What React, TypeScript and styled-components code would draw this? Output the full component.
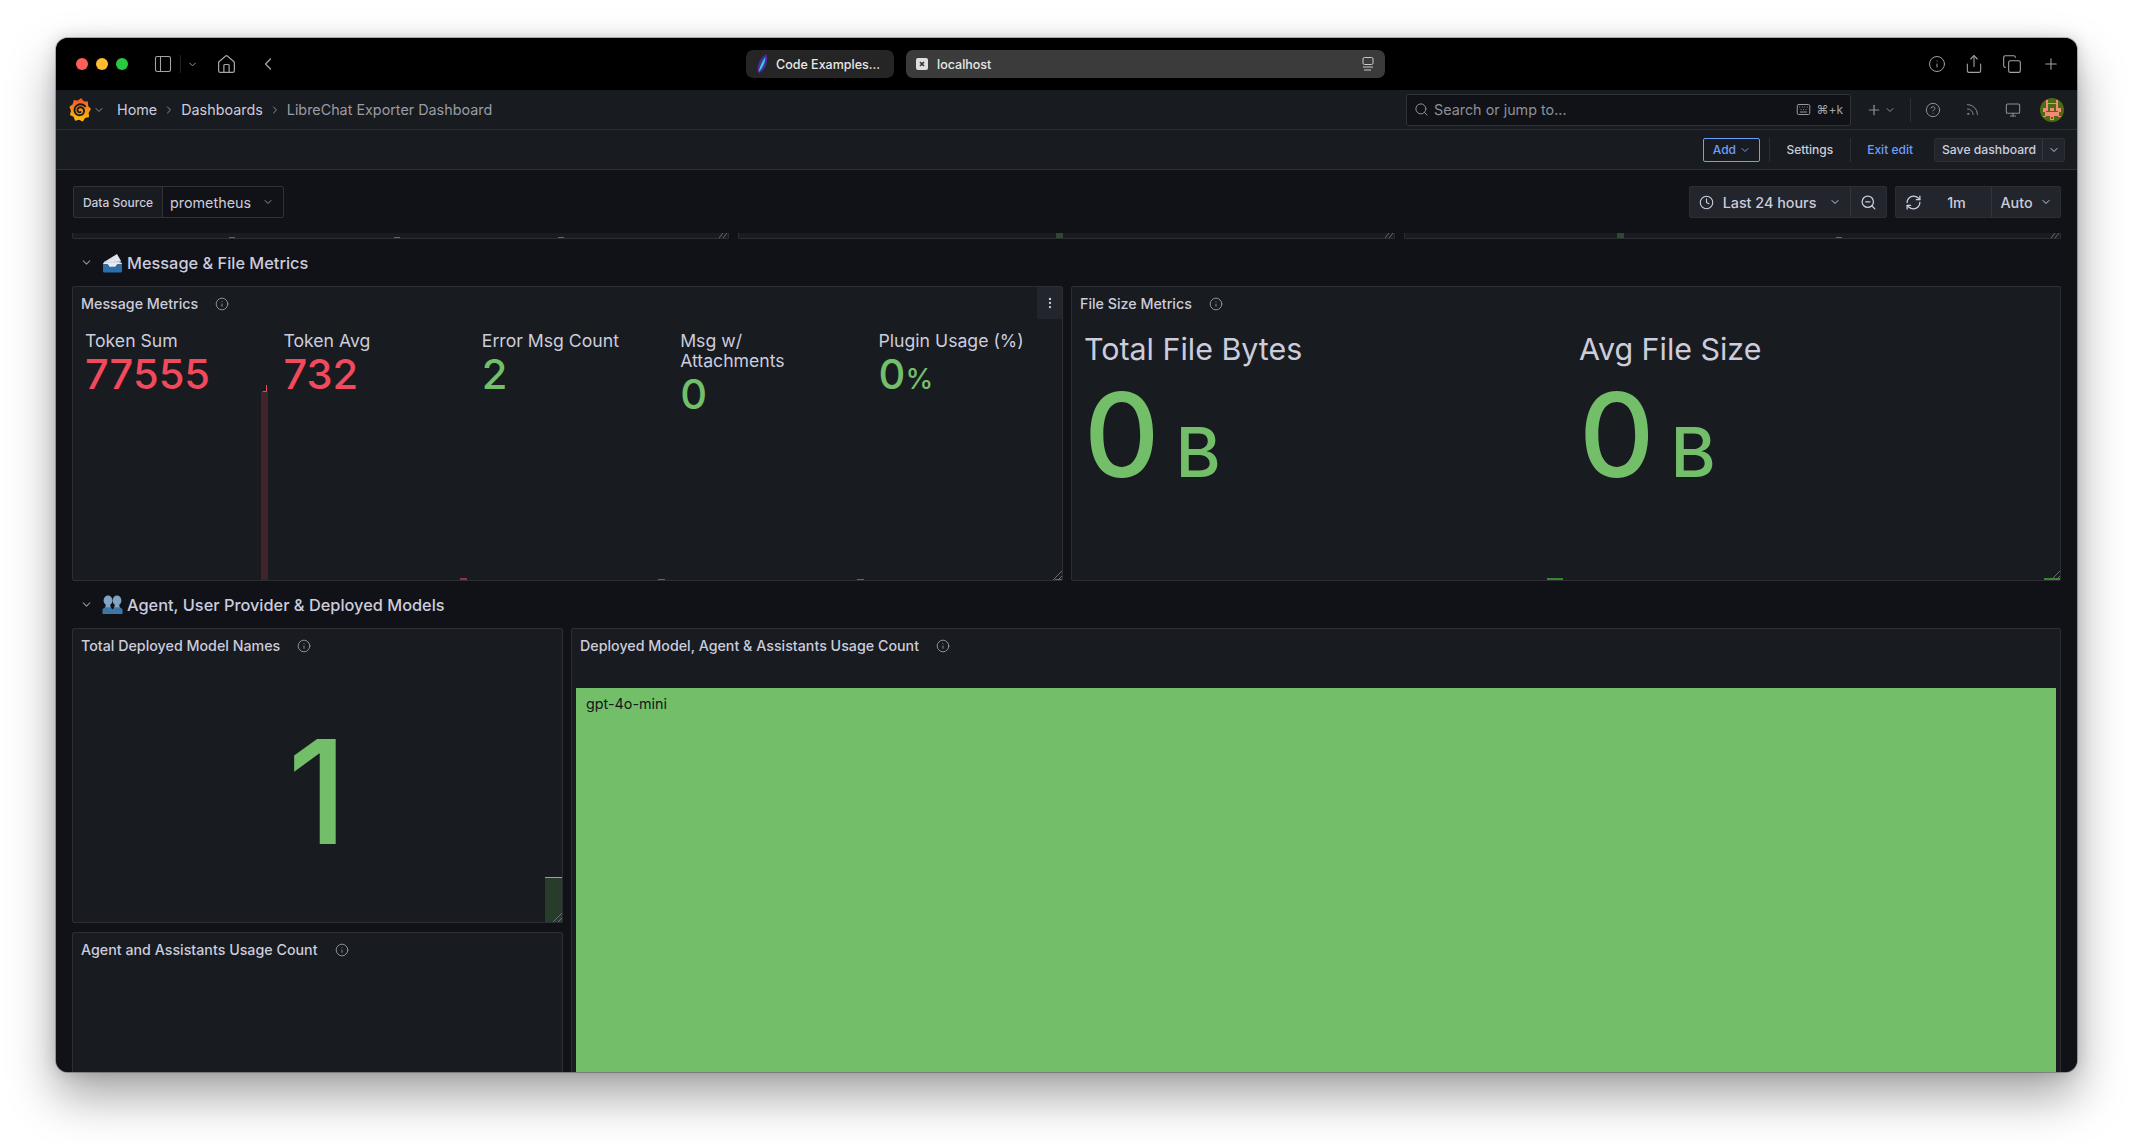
import React from "react";
import styled, { createGlobalStyle } from "styled-components";
import {
  ChevronDown, ChevronLeft, ChevronRight, Clock, Copy, EllipsisVertical, House, Info, Keyboard,
  CircleHelp, Monitor, PanelLeft, Plus, RefreshCw, Rss, Search, Share, ZoomOut,
} from "lucide-react";

const Global = createGlobalStyle`
  html, body { margin: 0; padding: 0; background: #fff; }
  * { box-sizing: border-box; }
  body { font-family: Inter, "Liberation Sans", sans-serif; }
`;

const Page = styled.div`
  width: 2133px;
  height: 1146px;
  padding: 38px 56px 0;
  overflow: hidden;
  background: #fff;
`;
const Window = styled.div`
  width: 2021px;
  height: 1034px;
  border-radius: 12px;
  overflow: hidden;
  display: flex;
  flex-direction: column;
  background: #111217;
  box-shadow: 0 24px 48px rgba(0, 0, 0, 0.36), 0 0 16px rgba(0, 0, 0, 0.16), 0 0 0 1px rgba(0, 0, 0, 0.25);
`;

/* Browser title bar */
const TitleBar = styled.div`
  height: 52px;
  flex: none;
  background: #000;
  display: flex;
  align-items: center;
  padding-left: 20px;
  color: #a4a4a4;
`;
const Lights = styled.div`
  display: flex;
  gap: 8px;
`;
const Light = styled.span<{ $c: string }>`
  width: 12px;
  height: 12px;
  border-radius: 50%;
  background: ${(p) => p.$c};
`;
const BarIcon = styled.span<{ $ml?: number }>`
  display: flex;
  margin-left: ${(p) => p.$ml ?? 0}px;
`;
const BarDivider = styled.span`
  width: 1px;
  height: 18px;
  background: #222;
  margin-left: 7px;
`;
const TabStrip = styled.div`
  position: relative;
  display: flex;
  gap: 12px;
  margin-left: 468px;
`;
const Tab = styled.div<{ $w: number; $active?: boolean }>`
  width: ${(p) => p.$w}px;
  height: 28px;
  border-radius: 7px;
  display: flex;
  align-items: center;
  padding-left: 10px;
  font-size: 12.5px;
  font-weight: 500;
  color: #e8e8e8;
  background: ${(p) => (p.$active ? "#3b3b3b" : "#252525")};
`;
const TabText = styled.span<{ $ml: number }>`
  margin-left: ${(p) => p.$ml}px;
`;
const TabEnd = styled.span`
  display: flex;
  margin-left: auto;
  margin-right: 11px;
`;
const BarRight = styled.div`
  margin-left: auto;
  display: flex;
  align-items: center;
  padding-right: 17px;
`;

/* Grafana nav */
const NavBar = styled.div`
  height: 40px;
  flex: none;
  background: #181b1f;
  border-bottom: 1px solid #2c2e33;
  display: flex;
  align-items: center;
  padding: 0 13px;
  color: #ccccdc;
  font-size: 14.35px;
`;
const Crumbs = styled.div`
  display: flex;
  align-items: center;
  gap: 6px;
  margin-left: 12px;
`;
const Crumb = styled.span<{ $muted?: boolean }>`
  color: ${(p) => (p.$muted ? "#9b9ca5" : "#ccccdc")};
`;
const Dim = styled.span<{ $ml?: number }>`
  display: flex;
  color: #8e9098;
  margin-left: ${(p) => p.$ml ?? 0}px;
`;
const SearchBox = styled.div`
  margin-left: auto;
  width: 445px;
  height: 32px;
  border: 1px solid #303237;
  border-radius: 2px;
  background: #111217;
  display: flex;
  align-items: center;
  padding: 0 7px 0 7px;
  color: #8e9098;
`;
const SearchText = styled.span`
  margin-left: 5px;
  color: #8e9098;
`;
const Kbd = styled.span`
  margin-left: auto;
  display: flex;
  align-items: center;
  gap: 5px;
  font-size: 12px;
  color: #a0a1a8;
`;
const NavDivider = styled.span`
  width: 1px;
  height: 24px;
  background: #2f3136;
  margin-left: 14px;
`;

/* Edit toolbar */
const Toolbar = styled.div`
  height: 40px;
  flex: none;
  background: #181b1f;
  border-bottom: 1px solid #2c2e33;
  display: flex;
  align-items: center;
  justify-content: flex-end;
  padding-right: 12px;
  font-size: 12px;
  font-weight: 500;
  color: #ccccdc;
`;
const AddButton = styled.div`
  width: 57px;
  height: 24px;
  border: 1px solid #6e9fff;
  border-radius: 2px;
  color: #6e9fff;
  display: flex;
  align-items: center;
  justify-content: center;
  gap: 3px;
  margin-right: 9px;
`;
const ToolDivider = styled.span`
  width: 1px;
  height: 24px;
  background: #2c2e33;
`;
const ToolText = styled.span<{ $ml: number; $mr: number; $blue?: boolean }>`
  margin: 0 ${(p) => p.$mr}px 0 ${(p) => p.$ml}px;
  color: ${(p) => (p.$blue ? "#6e9fff" : "#ccccdc")};
`;
const SaveGroup = styled.div`
  display: flex;
  width: 131px;
  height: 24px;
  margin-left: 21px;
  background: #22252b;
  border: 1px solid #2c2e33;
  border-radius: 2px;
`;
const SaveLabel = styled.span`
  width: 108px;
  padding-left: 7px;
  font-size: 12.2px;
  line-height: 22px;
  white-space: nowrap;
  border-right: 1px solid #36383e;
`;
const SaveCaret = styled.span`
  flex: 1;
  display: flex;
  align-items: center;
  justify-content: center;
`;

/* Dashboard */
const Content = styled.div`
  flex: 1;
  min-height: 0;
  overflow: hidden;
  padding: 16px 16px 0;
  background: #111217;
`;
const Controls = styled.div`
  display: flex;
  align-items: center;
  height: 32px;
  color: #ccccdc;
  font-size: 14.35px;
`;
const VarLabel = styled.div`
  width: 90px;
  height: 32px;
  margin-left: 1px;
  background: #181b1f;
  border: 1px solid #303237;
  border-radius: 2px 0 0 2px;
  font-size: 12px;
  font-weight: 500;
  display: flex;
  align-items: center;
  justify-content: center;
`;
const VarSelect = styled.div`
  width: 122px;
  height: 32px;
  margin-left: -1px;
  border: 1px solid #303237;
  border-radius: 0 2px 2px 0;
  display: flex;
  align-items: center;
  padding-left: 7px;
  gap: 11px;
`;
const Segments = styled.div<{ $w: number; $ml: number }>`
  width: ${(p) => p.$w}px;
  height: 32px;
  margin-left: ${(p) => p.$ml}px;
  background: #22252b;
  border: 1px solid #2c2e33;
  border-radius: 2px;
  display: flex;
  flex: none;
`;
const Seg = styled.div<{ $w?: number; $first?: boolean; $gap?: number }>`
  ${(p) => (p.$w ? `width: ${p.$w}px; flex: none;` : "flex: 1;")}
  display: flex;
  align-items: center;
  justify-content: center;
  gap: ${(p) => p.$gap ?? 9}px;
  ${(p) => (p.$first ? "" : "border-left: 1px solid #33353b;")}
`;
const SegText = styled.span<{ $ml?: number; $mr?: number }>`
  font-weight: 500;
  white-space: nowrap;
  margin-left: ${(p) => p.$ml ?? 0}px;
  margin-right: ${(p) => p.$mr ?? 0}px;
`;
const SegCaret = styled(ChevronDown)<{ $ml?: number }>`
  margin-left: ${(p) => p.$ml ?? 0}px;
`;
const Spacer = styled.div`
  flex: 1;
`;

const CutRow = styled.div`
  display: grid;
  grid-template-columns: repeat(3, 1fr);
  gap: 9px;
  height: 6px;
  margin-top: 15px;
`;
const CutPanel = styled.div`
  position: relative;
  overflow: hidden;
  background: #181b1f;
  border: 1px solid #2c2e33;
  border-top: 0;
  border-radius: 0 0 2px 2px;
`;
const CutTick = styled.span<{ $l: number; $w?: number; $h?: number; $c?: string }>`
  position: absolute;
  left: ${(p) => p.$l}px;
  bottom: 0;
  width: ${(p) => p.$w ?? 6}px;
  height: ${(p) => p.$h ?? 1}px;
  background: ${(p) => p.$c ?? "#37872d"};
`;
const CutHandle = styled.svg`
  position: absolute;
  right: 0;
  bottom: 0;
  width: 9px;
  height: 5px;
`;

const RowHeader = styled.div`
  height: 47px;
  display: flex;
  align-items: center;
  padding-left: 8px;
  color: #ccccdc;
  font-size: 16.35px;
  font-weight: 500;
`;
const RowTitle = styled.span`
  margin-left: 4px;
`;
const RowIcon = styled.span`
  display: flex;
  margin-left: 9px;
`;

const TwoUp = styled.div`
  display: grid;
  grid-template-columns: 991px 990px;
  gap: 8px;
  height: 295px;
`;
const ModelGrid = styled.div`
  display: grid;
  grid-template-columns: 491px 1490px;
  grid-template-rows: 295px 295px;
  column-gap: 8px;
  row-gap: 9px;
`;
const Panel = styled.section<{ $span?: number }>`
  position: relative;
  display: flex;
  flex-direction: column;
  background: #181b1f;
  border: 1px solid #2c2e33;
  border-radius: 2px;
  min-width: 0;
  ${(p) => (p.$span ? `grid-row: span ${p.$span};` : "")}
`;
const PanelHead = styled.header`
  height: 33px;
  flex: none;
  display: flex;
  align-items: center;
  padding-left: 8px;
  font-size: 14.25px;
  font-weight: 500;
  color: #ccccdc;
`;
const PanelInfo = styled.span`
  display: flex;
  margin-left: 17px;
  color: #9b9ca5;
`;
const PanelMenu = styled.span`
  position: absolute;
  top: 0;
  right: 0;
  width: 25px;
  height: 32px;
  background: #22252b;
  border-radius: 2px;
  display: flex;
  align-items: center;
  justify-content: center;
  color: #ccccdc;
`;
const Handle = styled.svg`
  position: absolute;
  right: 0;
  bottom: 0;
  width: 10px;
  height: 10px;
`;

const FiveStats = styled.div`
  flex: 1;
  min-height: 0;
  display: grid;
  grid-template-columns: repeat(5, 198.4px);
  padding: 11px 0 0 12px;
`;
const Stat = styled.div`
  position: relative;
  padding-right: 36px;
`;
const StatLabel = styled.div`
  font-size: 17.65px;
  line-height: 20px;
  color: #ccccdc;
`;
const StatValue = styled.div<{ $c: string }>`
  font-size: 41.6px;
  line-height: 46px;
  font-weight: 500;
  color: ${(p) => p.$c};
  white-space: nowrap;
`;
const StatUnit = styled.span`
  font-size: 28px;
`;
const Spark = styled.span<{ $h: number; $c: string; $w?: number }>`
  position: absolute;
  right: 15px;
  bottom: 0;
  width: ${(p) => p.$w ?? 7}px;
  height: ${(p) => p.$h}px;
  background: ${(p) => p.$c};
`;
const SparkTip = styled.svg`
  position: absolute;
  left: 0;
  top: -7px;
  width: 7px;
  height: 8px;
`;

const BigStats = styled.div`
  flex: 1;
  display: grid;
  grid-template-columns: 495px 1fr;
  padding: 11px 0 0 12px;
`;
const BigStat = styled.div`
  display: flex;
  flex-direction: column;
`;
const BigLabel = styled.div`
  font-size: 30.4px;
  line-height: 36px;
  color: #ccccdc;
`;
const BigValue = styled.div`
  margin-top: 3px;
  font-size: 117px;
  line-height: 130px;
  font-weight: 500;
  color: #73bf69;
  white-space: nowrap;
`;
const BigUnit = styled.span`
  font-size: 69px;
  margin-left: 16px;
`;
const BottomTick = styled.span<{ $r: number; $w: number }>`
  position: absolute;
  right: ${(p) => p.$r}px;
  bottom: 0;
  width: ${(p) => p.$w}px;
  height: 2px;
  background: #37872d;
`;

const CenterStat = styled.div`
  position: relative;
  flex: 1;
  display: flex;
  align-items: center;
  justify-content: center;
  font-size: 144px;
  font-weight: 500;
  color: #73bf69;
  padding-bottom: 1px;
`;
const MiniBar = styled.span`
  position: absolute;
  right: 0;
  bottom: 0;
  width: 17px;
  height: 45px;
  background: #273c2b;
  border-top: 1px solid #73bf69;
`;
const Treemap = styled.div`
  margin: 26px 4px 0 4px;
  flex: 1;
  background: #73bf69;
  padding: 7px 10px;
  font-size: 14.35px;
  line-height: 17px;
  color: #14161a;
`;

const spiral = (() => {
  const pts: string[] = [];
  for (let i = 0; i <= 60; i++) {
    const t = i / 60;
    const a = 1.2 + t * Math.PI * 2 * 1.7;
    const r = 1.6 + t * 5;
    pts.push(`${(11 + r * Math.cos(a)).toFixed(2)},${(12.5 + r * Math.sin(a)).toFixed(2)}`);
  }
  return pts.join(" ");
})();

const GrafanaLogo = () => {
  const pts: string[] = [];
  const n = 9;
  for (let i = 0; i < n * 2; i++) {
    const a = (i * Math.PI) / n - Math.PI / 2 + 0.1;
    const r = i % 2 === 0 ? 12 : 9.8;
    pts.push(`${(11 + r * Math.cos(a) * 0.92).toFixed(1)},${(12 + r * Math.sin(a)).toFixed(1)}`);
  }
  return (
    <svg width="22" height="24" viewBox="0 0 22 24">
      <defs>
        <linearGradient id="gf" x1="0" y1="1" x2="0" y2="0">
          <stop offset="0" stopColor="#fcc30b" />
          <stop offset="0.55" stopColor="#f78a1d" />
          <stop offset="1" stopColor="#ef4d28" />
        </linearGradient>
      </defs>
      <polygon points={pts.join(" ")} fill="url(#gf)" />
      <polyline points={spiral} fill="none" stroke="#181b1f" strokeWidth="1.9" strokeLinecap="round" />
    </svg>
  );
};

const Avatar = () => {
  const s = "#f28a76";
  const cells = [
    [4, 1, 1, 4], [10, 1, 1, 4], [5, 3, 5, 1], [4, 5, 1, 3], [10, 5, 1, 3], [2, 6, 2, 3], [11, 6, 2, 3],
    [6, 6, 3, 2], [3, 9, 9, 2], [6, 11, 3, 3], [2, 11, 2, 1], [11, 11, 2, 1],
  ];
  return (
    <svg width="24" height="24" viewBox="0 0 15 15" shapeRendering="crispEdges">
      <defs>
        <clipPath id="av"><circle cx="7.5" cy="7.5" r="7.5" /></clipPath>
      </defs>
      <g clipPath="url(#av)">
        <rect width="15" height="15" fill="#4d6b10" />
        {cells.map(([x, y, w, h], i) => (
          <rect key={i} x={x} y={y} width={w} height={h} fill={s} />
        ))}
        <rect x="7" y="12" width="1" height="1" fill="#4d6b10" />
      </g>
    </svg>
  );
};

const InboxEmoji = () => (
  <svg width="21" height="20" viewBox="0 0 21 20">
    <path d="M2 9 15 1l4 7-6 6H4z" fill="#dfe3ea" />
    <path d="M2 9l8 1 9-2" fill="none" stroke="#aeb6c2" strokeWidth="0.8" />
    <path d="M1 11h5l1.5 2.5h6L15 11h5v7a1.5 1.5 0 0 1-1.5 1.5h-16A1.5 1.5 0 0 1 1 18z" fill="#2d6ea8" />
    <path d="M1 11h5l1.5 2.5h6L15 11h5l-.6-1.4H1.6z" fill="#e8ecf2" />
  </svg>
);

const PeopleEmoji = () => (
  <svg width="21" height="20" viewBox="0 0 21 20">
    <g fill="#7fa4c4">
      <ellipse cx="6" cy="5.5" rx="4.4" ry="5" />
      <ellipse cx="15" cy="5.5" rx="4.4" ry="5" />
      <path d="M4 9h4l1 4.5H3z" />
      <path d="M13 9h4l1 4.5h-6z" />
    </g>
    <path d="M0.5 14.5c1-1.6 2.4-2 4.5-2.2h2c2 .2 2.6 1 3.5 2.2.9-1.2 1.6-2 3.5-2.2h2c2.1.2 3.5.6 4.5 2.2V19H.5z" fill="#3e76a6" />
  </svg>
);

const ResizeHandle = () => (
  <Handle viewBox="0 0 10 10">
    <path d="M1 10 10 1M6 10l4-4" stroke="#6b6d74" strokeWidth="1" fill="none" />
  </Handle>
);

const CutCorner = () => (
  <CutHandle viewBox="0 0 9 5">
    <path d="M0 5 4 0M4 5 8 0" stroke="#6b6d74" strokeWidth="1" fill="none" />
  </CutHandle>
);

const PanelTitle = ({ children }: { children: React.ReactNode }) => (
  <PanelHead>
    {children}
    <PanelInfo>
      <Info size={14} strokeWidth={1.5} />
    </PanelInfo>
  </PanelHead>
);

const LeafIcon = () => (
  <svg width="12" height="20" viewBox="0 0 12 20">
    <path d="M10.5 0C12 6 11 15 3 19.5-.5 14 2.5 5 10.5 0z" fill="#4a2a9e" />
    <path d="M9.5 3C9 9 6.5 14 2.5 18c1.2-5 3.5-10.5 7-15z" fill="#2fd6c8" />
  </svg>
);

const SiteIcon = () => (
  <svg width="12" height="12" viewBox="0 0 12 12">
    <rect width="12" height="12" rx="2" fill="#dedede" />
    <path d="M4 4l4 4M8 4 4 8" stroke="#333" strokeWidth="1.6" />
  </svg>
);

const ReaderIcon = () => (
  <svg width="12" height="14" viewBox="0 0 12 14" fill="none" stroke="#c9c9c9" strokeWidth="1">
    <rect x="1" y="0.5" width="10" height="7" rx="1.5" />
    <path d="M1 10h10M2 13h7" />
  </svg>
);

const stats = [
  { label: "Token Sum", value: "77555", color: "#f2495c", spark: 189, fill: "#41232a", tip: true },
  { label: "Token Avg", value: "732", color: "#f2495c", spark: 2, fill: "#9a2f40" },
  { label: "Error Msg Count", value: "2", color: "#73bf69", spark: 1, fill: "#37872d" },
  { label: "Msg w/ Attachments", value: "0", color: "#73bf69", spark: 1, fill: "#37872d" },
  { label: "Plugin Usage (%)", value: "0", unit: "%", color: "#73bf69", spark: 1, fill: "#37872d" },
];

export default function App() {
  return (
    <Page>
      <Global />
      <Window>
        <TitleBar>
          <Lights>
            <Light $c="#ff5f57" />
            <Light $c="#febc2e" />
            <Light $c="#28c840" />
          </Lights>
          <BarIcon $ml={25}><PanelLeft size={20} strokeWidth={1.3} /></BarIcon>
          <BarDivider />
          <BarIcon $ml={6}><ChevronDown size={11} strokeWidth={2} /></BarIcon>
          <BarIcon $ml={18}><House size={21} strokeWidth={1.4} /></BarIcon>
          <BarIcon $ml={21}><ChevronLeft size={20} strokeWidth={1.5} /></BarIcon>
          <TabStrip>
            <Tab $w={148}>
              <LeafIcon />
              <TabText $ml={8}>Code Examples...</TabText>
            </Tab>
            <Tab $w={479} $active>
              <SiteIcon />
              <TabText $ml={9}>localhost</TabText>
              <TabEnd><ReaderIcon /></TabEnd>
            </Tab>
          </TabStrip>
          <BarRight>
            <BarIcon><Info size={18} strokeWidth={1.3} /></BarIcon>
            <BarIcon $ml={18}><Share size={20} strokeWidth={1.3} /></BarIcon>
            <BarIcon $ml={18}><Copy size={20} strokeWidth={1.3} /></BarIcon>
            <BarIcon $ml={20}><Plus size={18} strokeWidth={1.4} /></BarIcon>
          </BarRight>
        </TitleBar>

        <NavBar>
          <GrafanaLogo />
          <Dim $ml={2}><ChevronDown size={12} strokeWidth={2} /></Dim>
          <Crumbs>
            <Crumb>Home</Crumb>
            <Dim><ChevronRight size={12} strokeWidth={2} /></Dim>
            <Crumb>Dashboards</Crumb>
            <Dim><ChevronRight size={12} strokeWidth={2} /></Dim>
            <Crumb $muted>LibreChat Exporter Dashboard</Crumb>
          </Crumbs>
          <SearchBox>
            <Search size={15} strokeWidth={1.6} />
            <SearchText>Search or jump to...</SearchText>
            <Kbd>
              <Keyboard size={15} strokeWidth={1.5} />
              ⌘+k
            </Kbd>
          </SearchBox>
          <Dim $ml={15}><Plus size={16} strokeWidth={1.8} /></Dim>
          <Dim $ml={2}><ChevronDown size={12} strokeWidth={2} /></Dim>
          <NavDivider />
          <Dim $ml={14}><CircleHelp size={16} strokeWidth={1.5} /></Dim>
          <Dim $ml={24}><Rss size={15} strokeWidth={1.5} /></Dim>
          <Dim $ml={25}><Monitor size={16} strokeWidth={1.6} /></Dim>
          <Dim $ml={19}><Avatar /></Dim>
        </NavBar>

        <Toolbar>
          <AddButton>
            Add
            <ChevronDown size={12} strokeWidth={2} />
          </AddButton>
          <ToolDivider />
          <ToolText $ml={16} $mr={17}>Settings</ToolText>
          <ToolDivider />
          <ToolText $ml={16} $mr={0} $blue>Exit edit</ToolText>
          <SaveGroup>
            <SaveLabel>Save dashboard</SaveLabel>
            <SaveCaret><ChevronDown size={12} strokeWidth={2} /></SaveCaret>
          </SaveGroup>
        </Toolbar>

        <Content>
          <Controls>
            <VarLabel>Data Source</VarLabel>
            <VarSelect>
              prometheus
              <Dim><ChevronDown size={12} strokeWidth={2} /></Dim>
            </VarSelect>
            <Spacer />
            <Segments $w={198} $ml={0}>
              <Seg $first>
                <Clock size={15} strokeWidth={1.8} />
                <SegText>Last 24 hours</SegText>
                <SegCaret size={12} strokeWidth={2} $ml={4} />
              </Seg>
              <Seg $w={36}><ZoomOut size={17} strokeWidth={1.8} /></Seg>
            </Segments>
            <Segments $w={166} $ml={8}>
              <Seg $first>
                <RefreshCw size={17} strokeWidth={1.8} />
                <SegText $ml={16} $mr={16}>1m</SegText>
              </Seg>
              <Seg $w={69} $gap={7}>
                <SegText>Auto</SegText>
                <SegCaret size={12} strokeWidth={2} />
              </Seg>
            </Segments>
          </Controls>

          <CutRow>
            <CutPanel>
              <CutTick $l={156} />
              <CutTick $l={321} />
              <CutTick $l={485} />
              <CutCorner />
            </CutPanel>
            <CutPanel>
              <CutTick $l={317} $w={7} $h={5} $c="#2b4a30" />
              <CutCorner />
            </CutPanel>
            <CutPanel>
              <CutTick $l={212} $w={7} $h={5} $c="#2b4a30" />
              <CutTick $l={431} />
              <CutCorner />
            </CutPanel>
          </CutRow>

          <RowHeader>
            <Dim><ChevronDown size={13} strokeWidth={2} /></Dim>
            <RowIcon><InboxEmoji /></RowIcon>
            <RowTitle>Message &amp; File Metrics</RowTitle>
          </RowHeader>

          <TwoUp>
            <Panel>
              <PanelTitle>Message Metrics</PanelTitle>
              <PanelMenu><EllipsisVertical size={14} strokeWidth={2} /></PanelMenu>
              <FiveStats>
                {stats.map((s) => (
                  <Stat key={s.label}>
                    <StatLabel>{s.label}</StatLabel>
                    <StatValue $c={s.color}>
                      {s.value}
                      {s.unit && <StatUnit>{s.unit}</StatUnit>}
                    </StatValue>
                    <Spark $h={s.spark} $c={s.fill}>
                      {s.tip && (
                        <SparkTip viewBox="0 0 7 8">
                          <path d="M2 7.5h3.5V1" fill="none" stroke="#f2495c" strokeWidth="1" />
                        </SparkTip>
                      )}
                    </Spark>
                  </Stat>
                ))}
              </FiveStats>
              <ResizeHandle />
            </Panel>
            <Panel>
              <PanelTitle>File Size Metrics</PanelTitle>
              <BigStats>
                <BigStat>
                  <BigLabel>Total File Bytes</BigLabel>
                  <BigValue>0<BigUnit>B</BigUnit></BigValue>
                </BigStat>
                <BigStat>
                  <BigLabel>Avg File Size</BigLabel>
                  <BigValue>0<BigUnit>B</BigUnit></BigValue>
                </BigStat>
              </BigStats>
              <BottomTick $r={497} $w={16} />
              <BottomTick $r={0} $w={16} />
              <ResizeHandle />
            </Panel>
          </TwoUp>

          <RowHeader>
            <Dim><ChevronDown size={13} strokeWidth={2} /></Dim>
            <RowIcon><PeopleEmoji /></RowIcon>
            <RowTitle>Agent, User Provider &amp; Deployed Models</RowTitle>
          </RowHeader>

          <ModelGrid>
            <Panel>
              <PanelTitle>Total Deployed Model Names</PanelTitle>
              <CenterStat>
                1
                <MiniBar />
              </CenterStat>
              <ResizeHandle />
            </Panel>
            <Panel $span={2}>
              <PanelTitle>Deployed Model, Agent &amp; Assistants Usage Count</PanelTitle>
              <Treemap>gpt-4o-mini</Treemap>
            </Panel>
            <Panel>
              <PanelTitle>Agent and Assistants Usage Count</PanelTitle>
            </Panel>
          </ModelGrid>
        </Content>
      </Window>
    </Page>
  );
}
